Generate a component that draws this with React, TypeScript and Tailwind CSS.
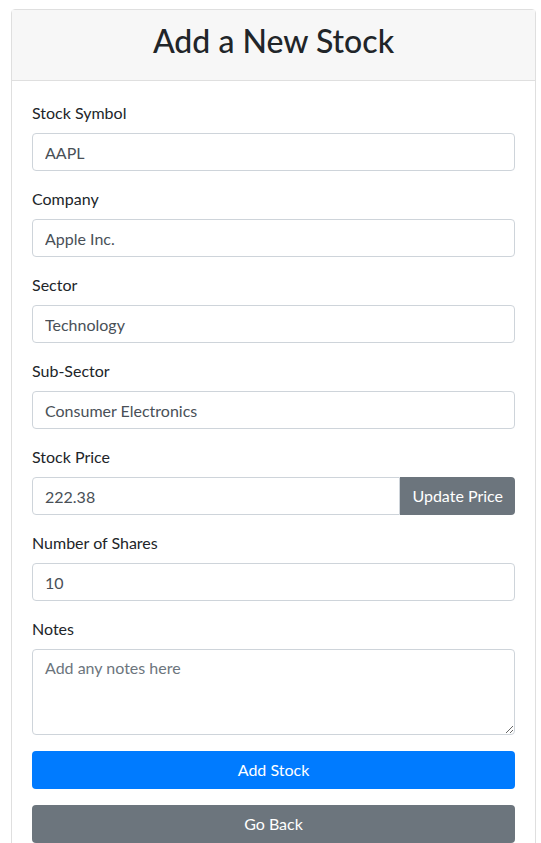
import React from 'react'

const font = { fontFamily: 'Lato, "Open Sans", sans-serif' }

function Field({ label, value }: { label: string; value: string }) {
  return (
    <div className="mb-4">
      <label className="mb-2 block text-base leading-6 text-[#212529]">{label}</label>
      <input
        defaultValue={value}
        className="block h-[38px] w-full rounded border border-[#ced4da] bg-white px-3 text-base text-[#495057] outline-none"
      />
    </div>
  )
}

export default function App() {
  return (
    <div className="min-h-[843px] bg-white pt-[9px]" style={font}>
      <div className="ml-[11px] w-[525px] rounded border border-[#dfdfdf] bg-white">
        <div className="border-b border-[#dfdfdf] bg-[#f7f7f7] px-5 pt-3 pb-3">
          <h2 className="mb-2 text-center text-[32px] leading-[38px] font-medium text-[#212529]">
            Add a New Stock
          </h2>
        </div>
        <div className="p-5">
          <Field label="Stock Symbol" value="AAPL" />
          <Field label="Company" value="Apple Inc." />
          <Field label="Sector" value="Technology" />
          <Field label="Sub-Sector" value="Consumer Electronics" />

          <div className="mb-4">
            <label className="mb-2 block text-base leading-6 text-[#212529]">Stock Price</label>
            <div className="flex">
              <input
                defaultValue="222.38"
                className="block h-[38px] min-w-0 flex-1 rounded-l border border-[#ced4da] bg-white px-3 text-base text-[#495057] outline-none"
              />
              <button className="h-[38px] rounded-r bg-[#6c757d] px-3 text-base text-white">
                Update Price
              </button>
            </div>
          </div>

          <Field label="Number of Shares" value="10" />

          <div className="mb-4">
            <label className="mb-2 block text-base leading-6 text-[#212529]">Notes</label>
            <textarea
              rows={3}
              placeholder="Add any notes here"
              className="block h-[86px] w-full rounded border border-[#ced4da] bg-white px-3 py-1.5 text-base leading-6 text-[#495057] outline-none placeholder:text-[#6c757d]"
            />
          </div>

          <button className="mb-4 block h-[38px] w-full rounded bg-[#007bff] text-base text-white">
            Add Stock
          </button>
          <button className="block h-[38px] w-full rounded bg-[#6c757d] text-base text-white">
            Go Back
          </button>
        </div>
      </div>
    </div>
  )
}
